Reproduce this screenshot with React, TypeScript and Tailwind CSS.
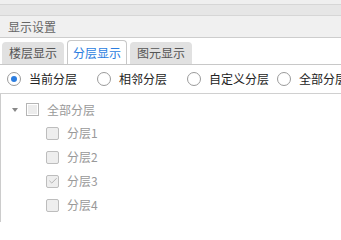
import { Check } from 'lucide-react'

const TABS = [
  { label: '楼层显示', active: false },
  { label: '分层显示', active: true },
  { label: '图元显示', active: false },
]

const MODES = ['当前分层', '相邻分层', '自定义分层', '全部分层']

const LAYERS = [
  { name: '分层1', checked: false },
  { name: '分层2', checked: false },
  { name: '分层3', checked: true },
  { name: '分层4', checked: false },
]

function Radio({ label, checked }: { label: string; checked: boolean }) {
  return (
    <label className="flex items-center gap-[8px] w-[90px] shrink-0 whitespace-nowrap">
      <span className="w-[14px] h-[14px] rounded-full border border-[#9a9a9a] bg-white flex items-center justify-center shrink-0">
        {checked && <span className="w-[6px] h-[6px] rounded-full bg-[#2b7de0]" />}
      </span>
      <span className="text-[#222]">{label}</span>
    </label>
  )
}

function LayerBox({ checked }: { checked: boolean }) {
  return (
    <span className="w-[13px] h-[13px] rounded-[2px] border border-[#bdbdbd] bg-[#eeeeee] flex items-center justify-center shrink-0">
      {checked && <Check size={10} strokeWidth={2} className="text-[#a8a8a8]" />}
    </span>
  )
}

export default function App() {
  return (
    <div
      className="w-[341px] h-[222px] bg-white overflow-hidden text-[12px] leading-none"
      style={{ fontFamily: '"Noto Sans CJK SC", "Liberation Sans", sans-serif' }}
    >
      <div className="h-[5px] bg-[#efefef] border-b border-[#d6d6d6]" />
      <div className="h-[11px] bg-[#e6e6e6] border-b border-[#d6d6d6]" />
      <div className="h-[22px] bg-[#f0f0f0] border-b border-[#cdcdcd] pl-[8px] flex items-center text-[#666]">
        显示设置
      </div>

      {/* tab strip */}
      <div className="h-[27px] border-b border-[#c8c8c8] flex items-end gap-[3px] pl-[2px]">
        {TABS.map((t) =>
          t.active ? (
            <div
              key={t.label}
              className="w-[60px] h-[24px] bg-white border border-b-0 border-[#c8c8c8] rounded-t-[4px] flex items-center justify-center text-[#2b7de0]"
            >
              {t.label}
            </div>
          ) : (
            <div
              key={t.label}
              className="w-[62px] h-[22px] bg-[#e1e1e1] rounded-t-[4px] flex items-center justify-center text-[#555]"
            >
              {t.label}
            </div>
          ),
        )}
      </div>

      {/* mode radios */}
      <div className="h-[29px] border-b border-[#d0d0d0] pl-[7px] flex items-center">
        {MODES.map((m, i) => (
          <Radio key={m} label={m} checked={i === 0} />
        ))}
      </div>

      {/* layer tree */}
      <div className="h-[200px] border-l border-[#cccccc] pt-[4px]">
        <div className="h-[23px] flex items-center pl-[11px]">
          <span className="w-0 h-0 border-l-[3px] border-r-[3px] border-t-[4px] border-l-transparent border-r-transparent border-t-[#888] mr-[8px]" />
          <span className="w-[13px] h-[13px] border border-[#b5b5b5] bg-[#ececec] shadow-[inset_0_0_0_1px_#ffffff] shrink-0" />
          <span className="ml-[8px] text-[#999]">全部分层</span>
        </div>
        {LAYERS.map((l) => (
          <div key={l.name} className="h-[24px] flex items-center pl-[45px]">
            <LayerBox checked={l.checked} />
            <span className="ml-[8px] text-[#999]">{l.name}</span>
          </div>
        ))}
      </div>
    </div>
  )
}
